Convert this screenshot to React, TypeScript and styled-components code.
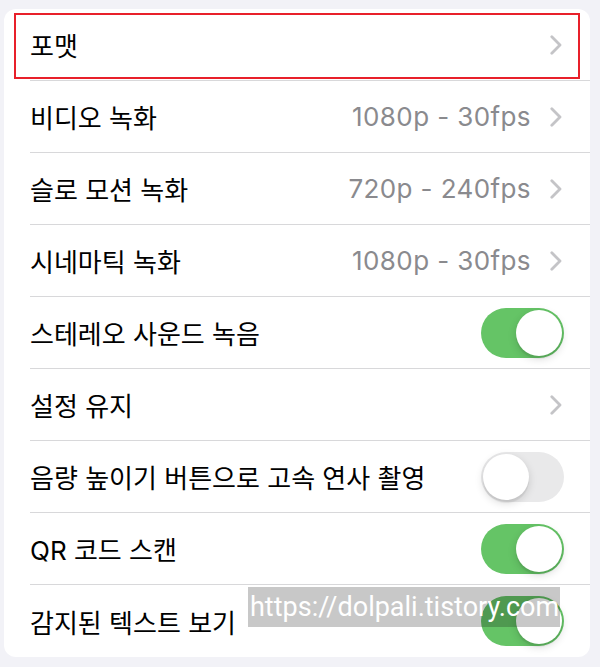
import React from "react";
import styled, { createGlobalStyle } from "styled-components";

const Global = createGlobalStyle`
  html, body {
    margin: 0;
    padding: 0;
    background: #f2f2f7;
  }
  body {
    font-family: "Inter", "Noto Sans CJK KR", sans-serif;
    -webkit-font-smoothing: antialiased;
  }
`;

const Page = styled.div`
  width: 600px;
  height: 667px;
  box-sizing: border-box;
  padding: 9px 10px 0 4px;
  background: #f2f2f7;
`;

const Card = styled.div`
  background: #ffffff;
  border-radius: 12px;
  display: flex;
  flex-direction: column;
`;

const Row = styled.div`
  position: relative;
  height: 72px;
  padding-left: 26px;
  display: flex;
`;

const RowInner = styled.div<{ $last?: boolean; $toggle?: boolean }>`
  flex: 1;
  display: flex;
  align-items: center;
  padding-right: ${(p) => (p.$toggle ? "26px" : "28px")};
  border-bottom: ${(p) => (p.$last ? "none" : "1px solid #d8d8da")};
  box-sizing: border-box;
`;

const Label = styled.span`
  flex: 1;
  font-family: "Inter", "Noto Sans CJK KR", sans-serif;
  font-size: 26px;
  color: #000;
  white-space: nowrap;
`;

const Value = styled.span`
  font-family: "Inter", "Noto Sans CJK KR", sans-serif;
  font-size: 26px;
  letter-spacing: 0.4px;
  color: #8a8a8e;
  margin-right: 19px;
  white-space: nowrap;
`;

const ChevronSvg = styled.svg`
  width: 12px;
  height: 20px;
  flex: none;
`;

const Chevron = () => (
  <ChevronSvg viewBox="0 0 12 20">
    <polyline
      points="1.8,1.8 10,10 1.8,18.2"
      fill="none"
      stroke="#c4c4c7"
      strokeWidth="2.8"
      strokeLinecap="round"
      strokeLinejoin="round"
    />
  </ChevronSvg>
);

const Track = styled.div<{ $on: boolean }>`
  position: relative;
  width: 83px;
  height: 50px;
  border-radius: 25px;
  flex: none;
  background: ${(p) => (p.$on ? "#65c466" : "#e9e9ea")};
`;

const Knob = styled.div<{ $on: boolean }>`
  position: absolute;
  top: 2px;
  left: ${(p) => (p.$on ? "35px" : "2px")};
  width: 46px;
  height: 46px;
  border-radius: 50%;
  background: #fff;
  box-shadow: 0 3px 8px rgba(0, 0, 0, 0.15), 0 3px 1px rgba(0, 0, 0, 0.06);
`;

const Toggle = ({ on }: { on: boolean }) => (
  <Track $on={on}>
    <Knob $on={on} />
  </Track>
);

const Highlight = styled.div`
  position: absolute;
  left: 10px;
  top: 4px;
  right: 10px;
  bottom: 2px;
  border: 2px solid #e8202a;
  pointer-events: none;
`;

const Watermark = styled.div`
  position: absolute;
  left: 244px;
  top: 2px;
  width: 312px;
  height: 40px;
  background: rgba(0, 0, 0, 0.215);
  color: #fff;
  font-family: "Roboto", "Noto Sans", sans-serif;
  font-size: 27px;
  line-height: 40px;
  padding-left: 2px;
  box-sizing: border-box;
  white-space: nowrap;
  pointer-events: none;
`;

type Item =
  | { label: string; kind: "link"; value?: string }
  | { label: string; kind: "toggle"; on: boolean };

const items: Item[] = [
  { label: "포맷", kind: "link" },
  { label: "비디오 녹화", kind: "link", value: "1080p - 30fps" },
  { label: "슬로 모션 녹화", kind: "link", value: "720p - 240fps" },
  { label: "시네마틱 녹화", kind: "link", value: "1080p - 30fps" },
  { label: "스테레오 사운드 녹음", kind: "toggle", on: true },
  { label: "설정 유지", kind: "link" },
  { label: "음량 높이기 버튼으로 고속 연사 촬영", kind: "toggle", on: false },
  { label: "QR 코드 스캔", kind: "toggle", on: true },
  { label: "감지된 텍스트 보기", kind: "toggle", on: true },
];

export default function App() {
  return (
    <>
      <Global />
      <Page>
        <Card>
          {items.map((it, i) => {
            const last = i === items.length - 1;
            return (
              <Row key={it.label}>
                <RowInner $last={last} $toggle={it.kind === "toggle"}>
                  <Label>{it.label}</Label>
                  {it.kind === "link" ? (
                    <>
                      {it.value && <Value>{it.value}</Value>}
                      <Chevron />
                    </>
                  ) : (
                    <Toggle on={it.on} />
                  )}
                </RowInner>
                {i === 0 && <Highlight />}
                {last && <Watermark>https://dolpali.tistory.com</Watermark>}
              </Row>
            );
          })}
        </Card>
      </Page>
    </>
  );
}
